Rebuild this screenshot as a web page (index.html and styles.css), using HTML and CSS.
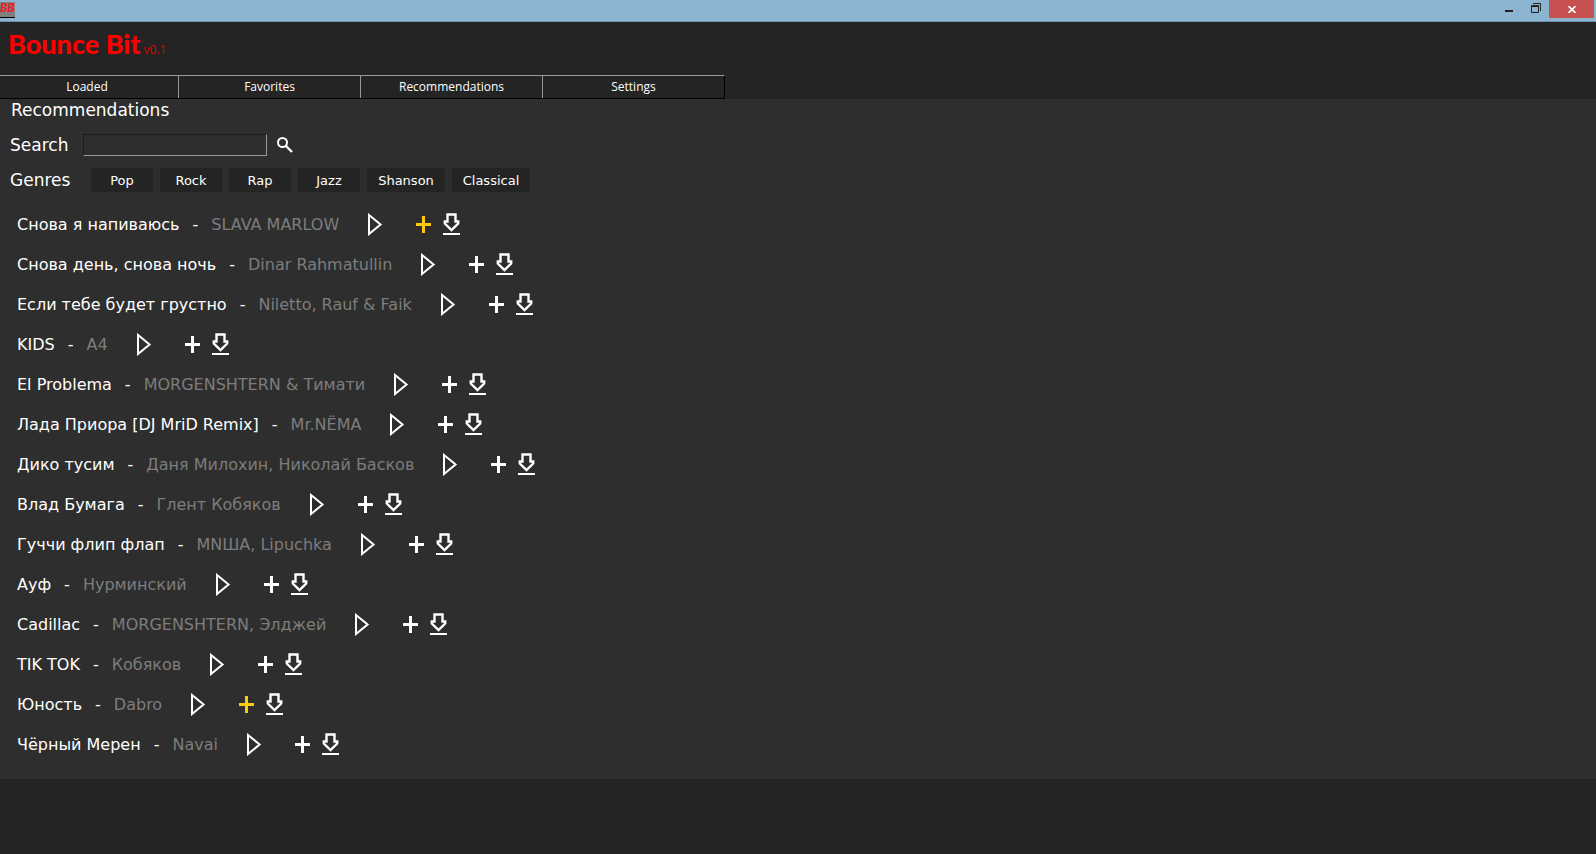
FILE: index.html
```html
<!DOCTYPE html>
<html lang="en">
<head>
<meta charset="utf-8">
<title>Bounce Bit</title>
<link rel="stylesheet" href="styles.css">
</head>
<body>
<svg class="defs" aria-hidden="true">
  <symbol id="play" viewBox="0 0 15 23"><path d="M1 2V21L12.6 11.5Z" fill="none" stroke="currentColor" stroke-width="2"/></symbol>
  <symbol id="plus" viewBox="0 0 15 17"><path d="M6 0H9V7H15V10H9V17H6V10H0V7H6Z" fill="currentColor"/></symbol>
  <symbol id="load" viewBox="0 0 17 22"><path d="M4.500 1.500H12.500V8.500H15.200V10.500L8.500 17L1.800 10.500V8.500H4.500Z" fill="none" stroke="currentColor" stroke-width="2.400"/><path d="M0 20H17V22H0Z" fill="currentColor"/></symbol>
</svg>
<header class="titlebar">
  <span class="app-icon">BB</span>
  <div class="window-buttons">
    <button class="win" aria-label="Minimize"><svg width="10" height="12"><path d="M0 7H8V9H0Z" fill="#222"/></svg></button>
    <button class="win" aria-label="Restore"><svg width="10" height="10"><path d="M.5 2.500H7.500V9.500H.5Z M0 3.500H8 M2 .5H9.500V8" fill="none" stroke="#222"/></svg></button>
    <button class="win close" aria-label="Close"><svg width="8" height="7"><path d="M.5 0L7.500 7M7.500 0L.5 7" stroke="#fff" stroke-width="1.600"/></svg></button>
  </div>
</header>
<div class="brand"><h1>Bounce Bit</h1><span>v0.1</span></div>
<nav class="tabs">
  <button>Loaded</button><button>Favorites</button><button>Recommendations</button><button>Settings</button>
</nav>
<main>
  <h2>Recommendations</h2>
  <div class="search">
    <label for="q">Search</label>
    <input id="q" type="text">
    <button aria-label="Search"><svg width="16" height="16" viewBox="0 0 16 16"><circle cx="5.500" cy="5.500" r="4.500" fill="none" stroke="#fff" stroke-width="2"/><path d="M9 9L15 15" stroke="#fff" stroke-width="2.400"/></svg></button>
  </div>
  <div class="genres">
    <span>Genres</span>
    <button>Pop</button><button>Rock</button><button>Rap</button><button>Jazz</button><button class="wide">Shanson</button><button class="wide">Classical</button>
  </div>
  <ul class="songs" id="songs"></ul>
</main>
<script src="app.js"></script>
</body>
</html>
```
FILE: styles.css
```css
* { box-sizing: border-box; }
body {
  margin: 0;
  min-height: 100vh;
  background: #242424;
  color: #fff;
  font-family: "DejaVu Sans", sans-serif;
  font-size: 16px;
}
button { border: 0; padding: 0; background: none; color: inherit; font: inherit; }
svg { display: block; }
.defs { position: absolute; width: 0; height: 0; }
.titlebar {
  display: flex;
  justify-content: space-between;
  height: 22px;
  background: #8ab4d0;
  border-bottom: 1px solid #6f93ab;
}
.app-icon {
  width: 15px;
  height: 16px;
  margin-top: 2px;
  background: #808080;
  border-bottom: 1px solid #000;
  color: #f01c28;
  font: italic bold 12px/15px "Liberation Mono", monospace;
}
.window-buttons { display: flex; padding-right: 2px; }
.win { display: flex; justify-content: center; width: 26px; height: 18px; }
.win svg { margin-top: 3px; }
.win.close { align-items: center; width: 45px; background: #c75050; }
.win.close svg { margin: 0; }
.brand {
  display: flex;
  align-items: baseline;
  gap: 3px;
  height: 53px;
  padding: 7px 8px 0;
  color: #f00;
}
.brand h1 { margin: 0; font: 900 27px/30px Lato, sans-serif; }
.brand span { color: #d00; font: 12px/16px "Open Sans", sans-serif; }
.tabs {
  display: flex;
  width: max-content;
  border-top: 1px solid #999;
  border-right: 1px solid #000;
  border-bottom: 1px solid #000;
}
.tabs button {
  width: 182px;
  height: 22px;
  border-left: 1px solid #999;
  font: 12px/22px "Open Sans", sans-serif;
}
.tabs button:first-child { width: 178px; border: 0; padding-right: 4px; }
main { padding-bottom: 15px; background: #2e2e2e; }
h2 { margin: 0; padding-left: 11px; font-size: 17px; line-height: 23px; font-weight: 400; }
.search { display: flex; align-items: center; height: 24px; margin-top: 11px; padding-left: 10px; font-size: 17px; }
.search label { width: 73px; }
.search input {
  width: 184px;
  height: 22px;
  border: 1px solid #1c1c1c;
  border-right-color: #999;
  border-bottom-color: #999;
  background: #2e2e2e;
  color: #fff;
}
.search button { margin-left: 10px; }
.genres { display: flex; align-items: center; gap: 7px; margin-top: 11px; padding-left: 10px; font-size: 17px; }
.genres span { width: 74px; }
.genres button { width: 62px; height: 24px; background: #242424; font-size: 13px; }
.genres .wide { width: 78px; }
.songs { margin: 12px 0 0; padding: 0 0 0 17px; list-style: none; }
.songs li { display: flex; align-items: center; height: 40px; white-space: pre; }
.artist { color: #7d7d7d; }
.dash { padding: 0 13px; }
.play { margin: 0 33px 0 29px; }
.load { margin-left: 12px; }
.liked { color: #ffc90e; }
```
FILE: app.js
```js
const songs = [
  ["Снова я напиваюсь", "SLAVA MARLOW", true],
  ["Снова день, снова ночь", "Dinar Rahmatullin"],
  ["Если тебе будет грустно", "Niletto, Rauf & Faik"],
  ["KIDS", "A4"],
  ["El Problema", "MORGENSHTERN & Тимати"],
  ["Лада Приора [DJ MriD Remix]", "Mr.NЁMA"],
  ["Дико тусим", "Даня Милохин, Николай Басков"],
  ["Влад Бумага", "Глент Кобяков"],
  ["Гуччи флип флап", "MNША, Lipuchka"],
  ["Ауф", "Нурминский"],
  ["Cadillac", "MORGENSHTERN, Элджей"],
  ["TIK TOK", "Кобяков"],
  ["Юность", "Dabro", true],
  ["Чёрный Мерен", "Navai"]
];
const icon = (id, w, h) => `<svg width="${w}" height="${h}"><use href="#${id}"/></svg>`;
document.getElementById("songs").innerHTML = songs.map(([title, artist, liked]) => `<li>
<span>${title}</span><span class="dash">-</span><span class="artist">${artist.replace("&", "&amp;")}</span>
<button class="play" aria-label="Play">${icon("play", 15, 23)}</button>
<button class="plus${liked ? " liked" : ""}" aria-label="Add">${icon("plus", 15, 17)}</button>
<button class="load" aria-label="Download">${icon("load", 17, 22)}</button></li>`).join("");
```
